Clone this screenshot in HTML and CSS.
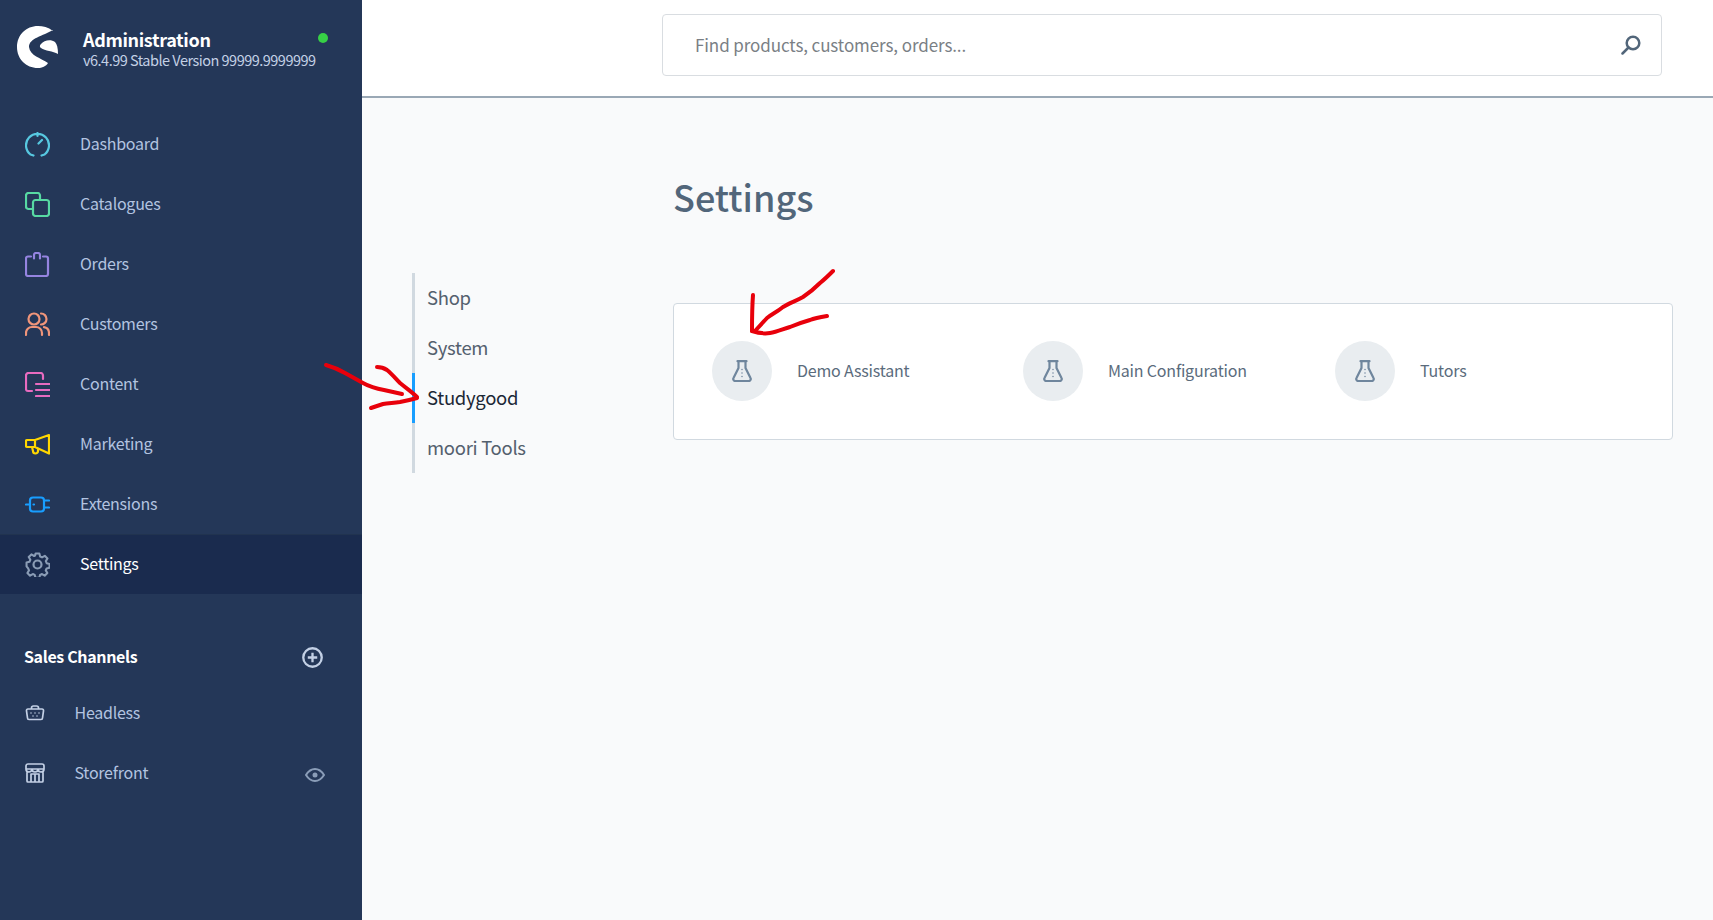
FILE: index.html
```html
<!DOCTYPE html>
<html lang="en">
<head>
<meta charset="utf-8">
<title>Settings</title>
<link rel="stylesheet" href="styles.css">
</head>
<body>
<div class="app">
  <aside class="sidebar">
    <header class="brand">
      <svg class="logo" viewBox="0 0 44 44" width="44" height="44"><path d="M37 6C32 2 27 1 22 1 10 1 1 10 1 22s9 21 21 21c4 0 8-1.500 10-5-7-5-18-7-19-16 0-9 14-11 24-17Z"/><path d="M25 19c3-4 10-5 14-2 2 2 3 6 3 12-5-3-13-3-17-6-1.500-1-1.500-2.500 0-4Z"/></svg>
      <div class="brand-text">
        <div class="brand-title">Administration</div>
        <div class="brand-version">v6.4.99 Stable Version 99999.9999999</div>
      </div>
      <span class="status-dot"></span>
    </header>
    <nav class="main-nav">
      <a class="nav-item">
        <svg class="nav-icon ic-dashboard" viewBox="0 0 25 25"><path d="M5.500 22.500A11.500 11.500 0 1 1 19.500 22.500M5.500 22.500l3 1M19.500 22.500l-3 1M12.500 1v3M13.500 11.500l3.500-3.500"/></svg>
        <span>Dashboard</span>
      </a>
      <a class="nav-item">
        <svg class="nav-icon ic-catalogues" viewBox="0 0 25 25"><path d="M7 17H3.500A2.500 2.500 0 0 1 1 14.500V3.500A2.500 2.500 0 0 1 3.500 1h9A2.500 2.500 0 0 1 15 3.500V7"/><rect x="8" y="8" width="16" height="16" rx="2.500"/></svg>
        <span>Catalogues</span>
      </a>
      <a class="nav-item">
        <svg class="nav-icon ic-orders" viewBox="0 0 25 25"><path d="M6 4.500H3A2 2 0 0 0 1 6.500V22a2 2 0 0 0 2 2H21a2 2 0 0 0 2-2V6.500a2 2 0 0 0-2-2H18M9 6.500V3a2 2 0 0 1 2-2h2a2 2 0 0 1 2 2V6.500"/></svg>
        <span>Orders</span>
      </a>
      <a class="nav-item">
        <svg class="nav-icon ic-customers" viewBox="0 0 25 25"><circle cx="9" cy="7" r="5.500"/><path d="M1 23v-2a6 6 0 0 1 6-6h4a6 6 0 0 1 6 6v2M16 1.500a5.500 5.500 0 0 1 0 11M19 15.200a6 6 0 0 1 5 5.800v2"/></svg>
        <span>Customers</span>
      </a>
      <a class="nav-item">
        <svg class="nav-icon ic-content" viewBox="0 0 25 25"><path d="M18 7V3.500A2.500 2.500 0 0 0 15.500 1H3.500A2.500 2.500 0 0 0 1 3.500V17a2 2 0 0 0 2 2H7M11 12H25M11 18H25M11 24H25"/></svg>
        <span>Content</span>
      </a>
      <a class="nav-item">
        <svg class="nav-icon ic-marketing" viewBox="0 0 25 25"><path d="M24 3 10 8H2a1 1 0 0 0-1 1v5a1 1 0 0 0 1 1h8l14 6.500ZM10 8v7M7 15l1 4a2.500 2.500 0 0 0 5 0v-2"/></svg>
        <span>Marketing</span>
      </a>
      <a class="nav-item">
        <svg class="nav-icon ic-extensions" viewBox="0 0 25 25"><path d="M1 12.500H5M8 5.500h8a3 3 0 0 1 3 3v8a3 3 0 0 1-3 3H8a3 3 0 0 1-3-3v-8a3 3 0 0 1 3-3ZM19 8.500H24M19 15.500H24M8.500 12.500h.5"/></svg>
        <span>Extensions</span>
      </a>
      <a class="nav-item is-active">
        <svg class="nav-icon ic-settings" viewBox="0 0 25 25"><circle cx="12.500" cy="12.500" r="4"/><path d="M10.500 1h4l.8 3.200 2 .9 2.900-1.600 2.800 2.800-1.700 2.800.9 2.100 3 .8v4l-3.100.8-.9 2 1.700 2.800-2.800 2.800-2.800-1.700-2.100.9-.8 3.100h-4l-.8-3.100-2-.9-2.900 1.700-2.800-2.800 1.700-2.800-.9-2.100L1 14.500v-4l3.100-.8.900-2.100-1.700-2.800 2.800-2.800L9 3.700l1-.4Z" transform="translate(0.600 0.500) scale(.95)"/></svg>
        <span>Settings</span>
      </a>
    </nav>
    <section class="channels">
      <div class="channels-head">
        <span>Sales Channels</span>
        <svg class="channel-add" viewBox="0 0 20 20"><circle cx="10" cy="10" r="8.800"/><path d="M10 5.500v9M5.500 10h9"/></svg>
      </div>
      <a class="channel-item">
        <svg class="channel-icon" viewBox="0 0 20 20"><path d="M3 6h14a1.500 1.500 0 0 1 1.500 1.800l-1 7.200a1.500 1.500 0 0 1-1.500 1.500H4A1.500 1.500 0 0 1 2.500 15l-1-7.200A1.500 1.500 0 0 1 3 6ZM6.500 6V5A2 2 0 0 1 8.500 3h3a2 2 0 0 1 2 2v1"/><path class="dots" d="M6 10v.1M10 10v.1M14 10v.1M8 13v.1M12 13v.1"/></svg>
        <span>Headless</span>
      </a>
      <a class="channel-item">
        <svg class="channel-icon" viewBox="0 0 20 20"><path d="M3 1h14a2 2 0 0 1 2 2v3H1V3a2 2 0 0 1 2-2ZM1 6a3 3 0 0 0 6 0 3 3 0 0 0 6 0 3 3 0 0 0 6 0M2 9v9a1 1 0 0 0 1 1h14a1 1 0 0 0 1-1V9M6 19v-8h8v8M10 11v8"/></svg>
        <span>Storefront</span>
        <svg class="channel-eye" viewBox="0 0 20 14"><path d="M1 7c2.500-4 5.500-6 9-6s6.500 2 9 6c-2.500 4-5.500 6-9 6S3.500 11 1 7Z"/><circle cx="10" cy="7" r="2.500"/></svg>
      </a>
    </section>
  </aside>

  <div class="workspace">
    <div class="topbar">
      <div class="search">
        <span class="search-text">Find products, customers, orders...</span>
        <svg class="search-icon" viewBox="0 0 20 20"><circle cx="12" cy="8" r="6.300"/><path d="M7.500 12.500 1.500 18.500"/></svg>
      </div>
    </div>
    <main class="page">
      <nav class="tabs">
        <a class="tab">Shop</a>
        <a class="tab">System</a>
        <a class="tab is-active">Studygood</a>
        <a class="tab">moori Tools</a>
      </nav>
      <div class="page-body">
        <h1 class="page-title">Settings</h1>
        <section class="card">
          <a class="setting">
            <span class="setting-icon"><svg viewBox="0 0 20 22"><path d="M5.500 1.200h9M6.500 1.200V8L1.500 18a2 2 0 0 0 1.800 3h13.400a2 2 0 0 0 1.800-3L13.500 8V1.200"/><path class="dots" d="M10 9.500v.1M10 13v.1M10 16.500v.1"/></svg></span>
            <span class="setting-label">Demo Assistant</span>
          </a>
          <a class="setting">
            <span class="setting-icon"><svg viewBox="0 0 20 22"><path d="M5.500 1.200h9M6.500 1.200V8L1.500 18a2 2 0 0 0 1.800 3h13.400a2 2 0 0 0 1.800-3L13.500 8V1.200"/><path class="dots" d="M10 9.500v.1M10 13v.1M10 16.500v.1"/></svg></span>
            <span class="setting-label">Main Configuration</span>
          </a>
          <a class="setting">
            <span class="setting-icon"><svg viewBox="0 0 20 22"><path d="M5.500 1.200h9M6.500 1.200V8L1.500 18a2 2 0 0 0 1.800 3h13.400a2 2 0 0 0 1.800-3L13.500 8V1.200"/><path class="dots" d="M10 9.500v.1M10 13v.1M10 16.500v.1"/></svg></span>
            <span class="setting-label">Tutors</span>
          </a>
        </section>
      </div>
    </main>
  </div>

  <svg class="scribble" viewBox="0 0 1713 920" width="1713" height="920" aria-hidden="true">
    <path d="M326 365C333 367 338 369 345 373L363 383C370 387 378 389 384 390L402 394"/>
    <path d="M377 367C381 367 384 368 387 370C392 374 396 379 400 383C406 388 412 392 417 397"/>
    <path d="M417 398C410 400 405 401 400 402C393 403 388 403 383 404L371 408"/>
    <path d="M833 271C828 276 825 279 820 283C815 288 809 293 803 297C796 301 789 303 783 307C777 312 772 314 767 318L755 331"/>
    <path d="M753 295C752 308 752 320 752 331"/>
    <path d="M752 331C758 333 764 334 770 333C777 332 783 329 790 327C797 324 803 322 810 320C815 318 821 317 827 316"/>
  </svg>
</div>
</body>
</html>
```

FILE: styles.css
```css
* { box-sizing: border-box; }
html, body { margin: 0; height: 100%; }
body {
  font-family: "Noto Sans CJK SC", "Noto Sans", sans-serif;
  color: #52667a;
  background: #f9fafb;
  overflow: hidden;
}
.app { position: relative; display: flex; height: 920px; overflow: hidden; }

/* Sidebar */
.sidebar { flex: 0 0 362px; background: #243758; color: #b3c4e0; }
.brand { position: relative; display: flex; align-items: center; height: 94px; margin-bottom: 20px; padding-left: 16px; }
.logo { fill: #fff; flex: none; }
.brand-text { margin-left: 23px; padding-top: 1px; }
.brand-title { font-size: 18px; line-height: 24px; font-weight: 700; letter-spacing: -.35px; color: #fff; }
.brand-version { font-size: 14.500px; line-height: 18px; letter-spacing: -.51px; color: #c3d0e5; }
.status-dot { position: absolute; left: 318px; top: 33px; width: 10px; height: 10px; border-radius: 50%; background: #37d046; }

.nav-item { display: flex; align-items: center; height: 60px; padding-left: 25px; font-size: 16px; letter-spacing: -.25px; }
.nav-item span { padding-bottom: 3px; }
.nav-item.is-active { background: #1a2b4e; color: #fff; box-shadow: inset 0 1px 0 #21334f; }
.nav-icon { flex: none; width: 25px; height: 25px; margin-right: 30px; fill: none; stroke-width: 2.200; stroke-linecap: round; stroke-linejoin: round; }
.ic-dashboard { stroke: #57c8e0; }
.ic-catalogues { stroke: #57d9a3; }
.ic-orders { stroke: #9584e0; }
.ic-customers { stroke: #f0957a; }
.ic-content { stroke: #e86bc0; }
.ic-marketing { stroke: #ffd700; }
.ic-extensions { stroke: #189eff; }
.ic-settings { stroke: #8a9cb5; }

.channels { margin-top: 37px; }
.channels-head { position: relative; display: flex; align-items: center; height: 52px; padding-left: 24px; font-size: 16px; font-weight: 700; letter-spacing: -.36px; color: #fff; }
.channels-head span { padding-bottom: 3px; }
.channel-add { position: absolute; left: 302px; top: 16px; width: 21px; height: 21px; fill: none; stroke: #c3d0e5; stroke-width: 2.200; }
.channel-item { position: relative; display: flex; align-items: center; height: 60px; padding-left: 25px; font-size: 16px; letter-spacing: -.25px; }
.channel-item span { padding-bottom: 3px; }
.channel-icon { flex: none; width: 20px; height: 20px; margin-right: 29.500px; fill: none; stroke: #c3d0e5; stroke-width: 1.700; stroke-linecap: round; stroke-linejoin: round; }
.channel-eye { position: absolute; left: 305px; top: 25px; width: 20px; height: 14px; fill: none; stroke: #8a9db8; stroke-width: 2; }
.channel-eye circle { fill: #8a9db8; stroke: none; }
.dots { stroke-width: 1.500; stroke-linecap: round; }

/* Top bar */
.workspace { flex: 1; display: flex; flex-direction: column; min-width: 0; }
.topbar { flex: none; height: 98px; padding: 14px 0 0 300px; background: #fff; border-bottom: 2px solid #9aa8b5; }
.search { position: relative; display: flex; align-items: center; width: 1000px; height: 62px; padding: 0 0 2px 32px; border: 1px solid #d9dde1; border-radius: 4px; background: #fff; }
.search-text { font-size: 17px; letter-spacing: -.1px; color: #7a7f85; }
.search-icon { position: absolute; left: 958px; top: 20px; width: 20px; height: 20px; fill: none; stroke: #52667a; stroke-width: 2.500; stroke-linecap: round; }

/* Settings page */
.page { flex: 1; display: flex; padding-left: 50px; }
.tabs { flex: 0 0 261px; align-self: flex-start; margin-top: 175px; height: 200px; border-left: 3px solid #d1d9e0; }
.tab { display: block; height: 50px; margin-left: -3px; padding-left: 12px; border-left: 3px solid transparent; font-size: 18.500px; letter-spacing: -.3px; line-height: 48px; color: #54606e; }
.tab.is-active { border-left-color: #189eff; color: #1c2836; }
.page-body { flex: 0 0 1000px; min-width: 0; padding-top: 73px; }
.page-title { margin: 0 0 82px; font-size: 36px; line-height: 50px; font-weight: 500; color: #52667a; }
.card { display: grid; grid-template-columns: 311px 312px 1fr; height: 137px; padding: 37px 38px; border: 1px solid #d1d9e0; border-radius: 4px; background: #fff; }
.setting { display: flex; align-items: center; gap: 25px; height: 60px; font-size: 16px; letter-spacing: -.19px; color: #5a6b7c; }
.setting-label { padding-bottom: 2px; }
.setting-icon { display: flex; align-items: center; justify-content: center; flex: none; width: 60px; height: 60px; border-radius: 50%; background: #e9edf0; }
.setting-icon svg { width: 20px; height: 22px; fill: none; stroke: #6f869d; stroke-width: 2.200; stroke-linecap: round; stroke-linejoin: round; }

/* Hand-drawn annotation over the screenshot */
.scribble { position: absolute; left: 0; top: 0; pointer-events: none; fill: none; stroke: #e8000b; stroke-width: 4; stroke-linecap: round; stroke-linejoin: round; }
```
